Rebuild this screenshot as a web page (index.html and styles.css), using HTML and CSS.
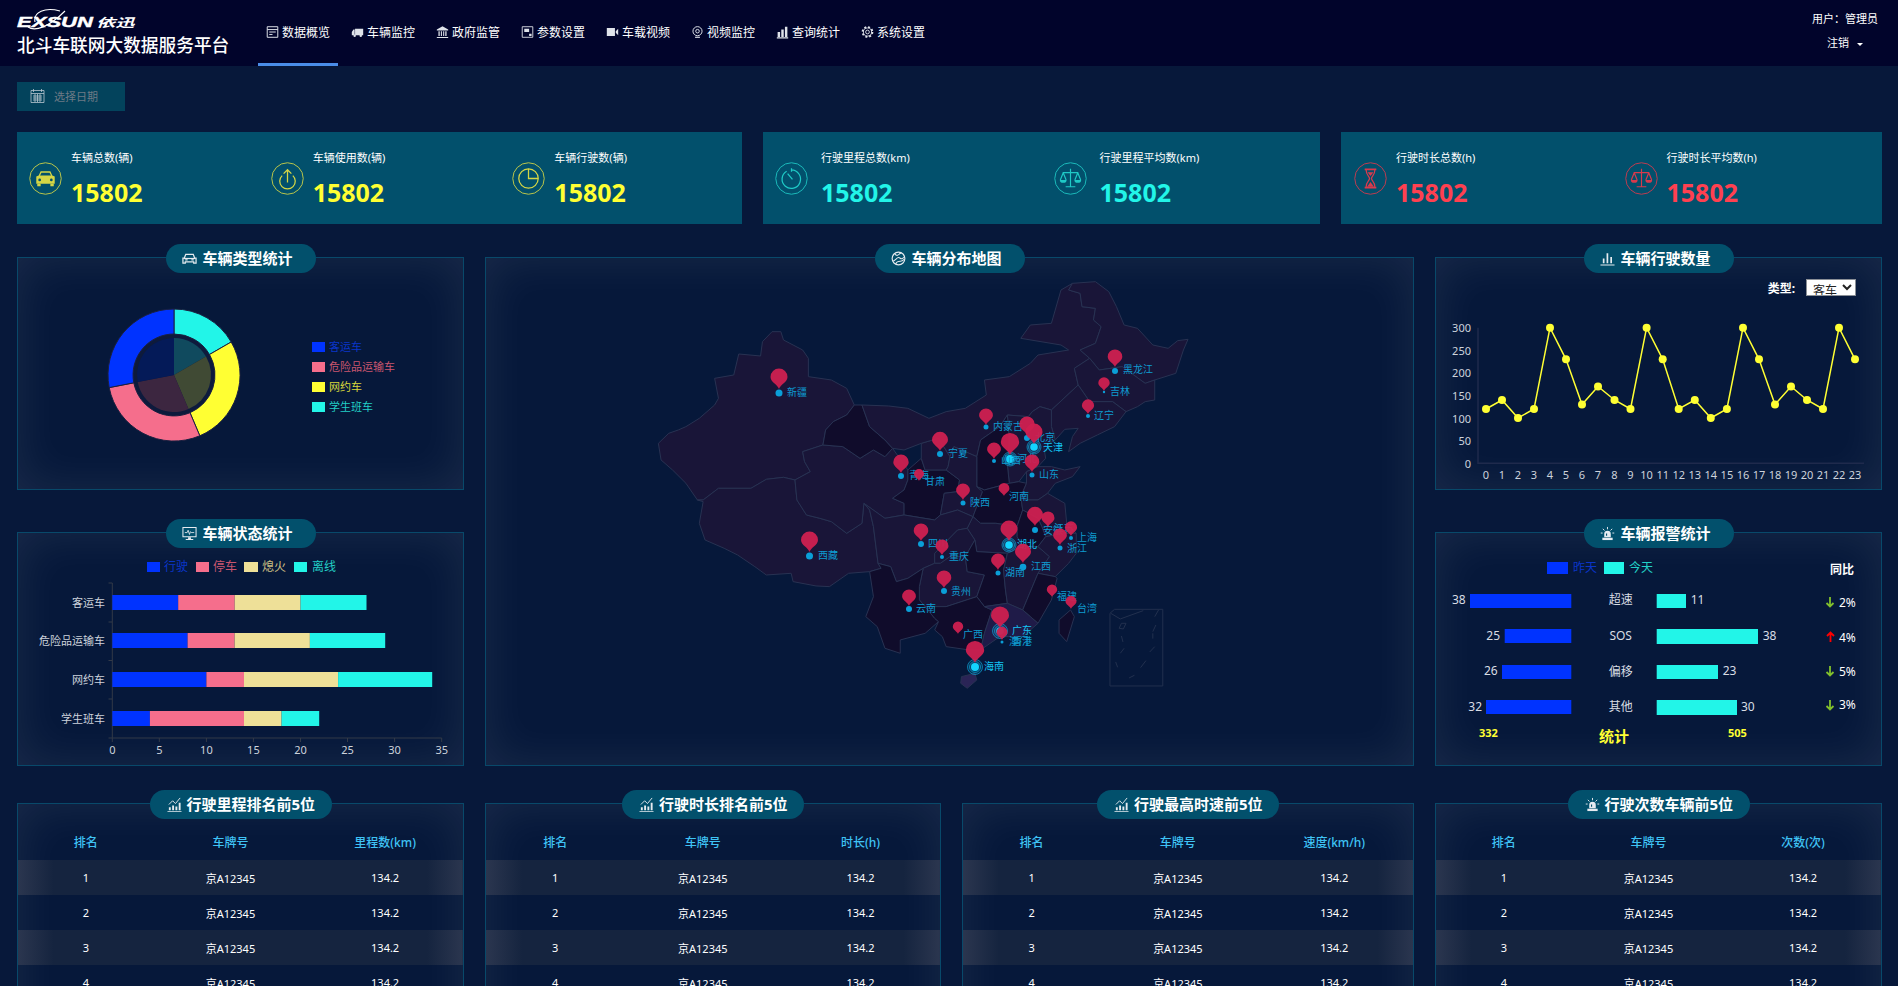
FILE: index.html
```html
<!DOCTYPE html>
<html lang="zh-CN">
<head>
<meta charset="utf-8">
<title>北斗车联网大数据服务平台</title>
<link rel="stylesheet" href="styles.css">
</head>
<body>
<svg class="sprite" aria-hidden="true">
  <symbol id="n-doc" viewBox="0 0 16 16"><path d="M1.5 1.5h13v13h-13zM1.5 5h13M4 8h8M4 11h4" fill="none" stroke="currentColor" stroke-width="1.2"/></symbol>
  <symbol id="n-truck" viewBox="0 0 16 16"><path d="M5 4h10v8H5zM1 8l2-3h1.5v7H1z" fill="currentColor"/><circle cx="4.5" cy="12.5" r="1.5" fill="currentColor"/><circle cx="12" cy="12.5" r="1.5" fill="currentColor"/></symbol>
  <symbol id="n-bank" viewBox="0 0 16 16"><path d="M8 1l7 4v1H1V5zM3 7h1.6v6H3zM6 7h1.3v6H6zM8.8 7h1.3v6H8.8zM11.4 7H13v6h-1.6zM1 14h14v1.5H1z" fill="currentColor"/></symbol>
  <symbol id="n-set" viewBox="0 0 16 16"><path d="M1.5 1.5h13v13h-13z" fill="none" stroke="currentColor" stroke-width="1.1"/><path d="M4 4h6v4H4zM10 10h3v3h-3z" fill="currentColor"/></symbol>
  <symbol id="n-video" viewBox="0 0 16 16"><path d="M1 3h10v10H1zM12 7l3-3v8l-3-3z" fill="currentColor"/></symbol>
  <symbol id="n-cam" viewBox="0 0 16 16"><circle cx="8" cy="7" r="5.6" fill="none" stroke="currentColor" stroke-width="1.2"/><circle cx="8" cy="7" r="2.2" fill="none" stroke="currentColor" stroke-width="1.2"/><path d="M5 14.5h6" stroke="currentColor" stroke-width="1.4"/></symbol>
  <symbol id="n-bars" viewBox="0 0 16 16"><path d="M2 8h3v6H2zM6.5 5h3v9h-3zM11 1.500h3V14h-3zM1 14.500h14V16H1z" fill="currentColor"/></symbol>
  <symbol id="n-gear" viewBox="0 0 16 16"><circle cx="8" cy="8" r="6" fill="none" stroke="currentColor" stroke-width="2.400" stroke-dasharray="2.400 2.310"/><circle cx="8" cy="8" r="5" fill="none" stroke="currentColor" stroke-width="1"/><circle cx="8" cy="8" r="2.300" fill="none" stroke="currentColor" stroke-width="1.100"/></symbol>
  <symbol id="n-cal" viewBox="0 0 15 15"><path d="M1 2.500h13v12H1zM1 5.500h13M3.500 1v3M11.500 1v3M3 8h9M3 10h9M3 12h9M5 6v8M7.500 6v8M10 6v8" fill="none" stroke="currentColor" stroke-width=".8"/></symbol>
  <symbol id="s-taxi" viewBox="0 0 34 34"><circle cx="17" cy="17" r="16.200" fill="none" stroke="currentColor" stroke-width=".9"/><path d="M12 9.500h10l2 4.500 2.500 1v7.500h-19V15l2.500-1z" fill="currentColor"/><path d="M12.800 11h8.400l1.400 3H11.400z" fill="#02506c"/><circle cx="11" cy="18.500" r="1.400" fill="#02506c"/><circle cx="23" cy="18.500" r="1.400" fill="#02506c"/><path d="M8.500 22.500h3.500v2.500H8.500zM22 22.500h3.500v2.500H22z" fill="currentColor"/></symbol>
  <symbol id="s-up" viewBox="0 0 34 34"><circle cx="17" cy="17" r="16.200" fill="none" stroke="currentColor" stroke-width=".9"/><path d="M11.500 14a8 8 0 1 0 11 0M17 21V8M13 12l4-4 4 4" fill="none" stroke="currentColor" stroke-width="1.300"/></symbol>
  <symbol id="s-pie" viewBox="0 0 34 34"><circle cx="17" cy="17" r="16.200" fill="none" stroke="currentColor" stroke-width=".9"/><circle cx="17" cy="17" r="10" fill="none" stroke="currentColor" stroke-width="1.300"/><path d="M17 7v10h10" fill="none" stroke="currentColor" stroke-width="1.300"/></symbol>
  <symbol id="s-timer" viewBox="0 0 34 34"><circle cx="17" cy="17" r="16.200" fill="none" stroke="currentColor" stroke-width=".9"/><path d="M12 9.500a9.500 9.500 0 1 0 5-1.300M17 6.500v3.500M13 12l5 6" fill="none" stroke="currentColor" stroke-width="1.300"/></symbol>
  <symbol id="s-scale" viewBox="0 0 34 34"><circle cx="17" cy="17" r="16.200" fill="none" stroke="currentColor" stroke-width=".9"/><path d="M17 7v18M12 25.500h10M9 11h16M9.500 11l-3 7.500M9.500 11l3 7.500M24.500 11l-3 7.500M24.500 11l3 7.500" fill="none" stroke="currentColor" stroke-width="1.200"/><path d="M6 18.500h7a3.500 3 0 0 1-7 0zM21 18.500h7a3.500 3 0 0 1-7 0z" fill="currentColor"/></symbol>
  <symbol id="s-glass" viewBox="0 0 34 34"><circle cx="17" cy="17" r="16.200" fill="none" stroke="currentColor" stroke-width=".9"/><path d="M11 7.500h12M11 26.500h12" stroke="currentColor" stroke-width="1.800"/><path d="M12.500 8c0 6 3.500 6.500 3.500 9s-3.500 3-3.500 9M21.500 8c0 6-3.500 6.500-3.500 9s3.500 3 3.500 9" fill="none" stroke="currentColor" stroke-width="1.300"/><path d="M13.500 25.500l3.500-5 3.500 5zM14 10.500h6l-3 4z" fill="currentColor"/></symbol>
  <symbol id="p-car" viewBox="0 0 16 16"><path d="M4 3.500h8l1.500 4H15v5.500h-2.500v-1.500h-9V13H1V7.500h1.500z" fill="none" stroke="currentColor" stroke-width="1.300"/><path d="M2 8h12" stroke="currentColor" stroke-width="1.300"/><path d="M3.500 9.500h2.500M10 9.500h2.500" stroke="currentColor" stroke-width="1.200"/></symbol>
  <symbol id="p-monitor" viewBox="0 0 16 16"><path d="M1 1.500h14v10H1z" fill="none" stroke="currentColor" stroke-width="1.100"/><path d="M3 7h2.500l1-2.500L8 9l1-3 .8 1H13" fill="none" stroke="currentColor" stroke-width=".9"/><path d="M6.500 12h3v1.800h-3zM4 13.800h8V15H4z" fill="currentColor"/></symbol>
  <symbol id="p-bars" viewBox="0 0 16 16"><path d="M3 8h1.800v5H3zM7 2.500h1.800V13H7zM11 6.500h1.800V13H11zM.5 14.500h15v1H.5z" fill="currentColor"/></symbol>
  <symbol id="p-alarm" viewBox="0 0 16 16"><path d="M4.500 12V8.500a3.500 3.500 0 0 1 7 0V12z" fill="currentColor"/><path d="M2.500 12.500h11V15h-11z" fill="currentColor"/><path d="M8 1v2.500M3 3l1.800 1.800M13 3l-1.800 1.800M.8 7.500h2M13.200 7.500h2" stroke="currentColor" stroke-width="1"/><path d="M7 8v2.500" stroke="#02506c" stroke-width="1.200"/></symbol>
  <symbol id="p-trend" viewBox="0 0 16 16"><path d="M2 11h2v3H2zM5.500 9h2v5h-2zM9 10h2v4H9zM12.500 6h2v8h-2zM.5 14.800h15v1H.5z" fill="currentColor"/><path d="M2 8l4-4 3 3 5-6" fill="none" stroke="currentColor" stroke-width="1"/></symbol>
  <symbol id="p-globe" viewBox="0 0 16 16"><circle cx="8" cy="8" r="6.800" fill="none" stroke="currentColor" stroke-width="1.200"/><path d="M2 11c3-1 4-4 6-4s2 2 4 1 2-2 2-2M5 14c1-3 3-3 5-3s3-1 4-2M4 3c1 2 3 2 4 1s2-2 3-2" fill="none" stroke="currentColor" stroke-width="1.100"/></symbol>
</svg>

<header class="topbar">
  <div class="brand">
    <div class="logo">
      <svg class="logo-swoosh" viewBox="0 0 40 24"><path d="M1 19C8 24 22 19 38 3M8 14C6 4 18-1 33 3" fill="none" stroke="#fff" stroke-width="1.100"/></svg>
      <span class="logo-latin">EXSUN</span><span class="logo-cn">依迅</span>
    </div>
    <h1 class="brand-title">北斗车联网大数据服务平台</h1>
  </div>
  <nav class="nav">
    <a class="nav-item nav-active"><svg class="nav-icon"><use href="#n-doc"/></svg>数据概览</a>
    <a class="nav-item"><svg class="nav-icon"><use href="#n-truck"/></svg>车辆监控</a>
    <a class="nav-item"><svg class="nav-icon"><use href="#n-bank"/></svg>政府监管</a>
    <a class="nav-item"><svg class="nav-icon"><use href="#n-set"/></svg>参数设置</a>
    <a class="nav-item"><svg class="nav-icon"><use href="#n-video"/></svg>车载视频</a>
    <a class="nav-item"><svg class="nav-icon"><use href="#n-cam"/></svg>视频监控</a>
    <a class="nav-item"><svg class="nav-icon"><use href="#n-bars"/></svg>查询统计</a>
    <a class="nav-item"><svg class="nav-icon"><use href="#n-gear"/></svg>系统设置</a>
  </nav>
  <div class="user">
    <div class="user-name">用户：管理员</div>
    <div class="user-logout">注销<span class="caret"></span></div>
  </div>
</header>

<main class="main">
  <div class="date-box"><svg class="date-icon"><use href="#n-cal"/></svg><span>选择日期</span></div>

  <section class="stats">
    <div class="stat-card stat-a">
      <div class="stat yellow"><svg class="stat-icon"><use href="#s-taxi"/></svg><div class="stat-body"><div class="stat-label">车辆总数(辆)</div><div class="stat-value">15802</div></div></div>
      <div class="stat yellow"><svg class="stat-icon"><use href="#s-up"/></svg><div class="stat-body"><div class="stat-label">车辆使用数(辆)</div><div class="stat-value">15802</div></div></div>
      <div class="stat yellow"><svg class="stat-icon"><use href="#s-pie"/></svg><div class="stat-body"><div class="stat-label">车辆行驶数(辆)</div><div class="stat-value">15802</div></div></div>
    </div>
    <div class="stat-card stat-b">
      <div class="stat cyan"><svg class="stat-icon"><use href="#s-timer"/></svg><div class="stat-body"><div class="stat-label">行驶里程总数(km)</div><div class="stat-value">15802</div></div></div>
      <div class="stat cyan"><svg class="stat-icon"><use href="#s-scale"/></svg><div class="stat-body"><div class="stat-label">行驶里程平均数(km)</div><div class="stat-value">15802</div></div></div>
    </div>
    <div class="stat-card stat-c">
      <div class="stat red"><svg class="stat-icon"><use href="#s-glass"/></svg><div class="stat-body"><div class="stat-label">行驶时长总数(h)</div><div class="stat-value">15802</div></div></div>
      <div class="stat red"><svg class="stat-icon"><use href="#s-scale"/></svg><div class="stat-body"><div class="stat-label">行驶时长平均数(h)</div><div class="stat-value">15802</div></div></div>
    </div>
  </section>

  <section class="board">
    <article class="panel">
      <h2 class="pill"><svg class="pill-icon"><use href="#p-car"/></svg>车辆类型统计</h2>
      <svg class="chart" viewBox="18 273 445 216" width="445" height="216">
        <g transform="translate(174 375)">
          <circle r="41" fill="#0d1a3c"/>
          <path class="slice" fill="#22f5e8" d="M0 -66A66 66 0 0 1 57.2 -33L35.500 -20.500A41 41 0 0 0 0 -41Z"/>
          <path class="slice" fill="#ffff33" d="M57.2 -33A66 66 0 0 1 25.800 60.800L16 37.700A41 41 0 0 0 35.500 -20.500Z"/>
          <path class="slice" fill="#f56e8c" d="M25.800 60.800A66 66 0 0 1 -64.800 12.600L-40.200 7.800A41 41 0 0 0 16 37.700Z"/>
          <path class="slice" fill="#0033ff" d="M-64.800 12.600A66 66 0 0 1 0 -66L0 -41A41 41 0 0 0 -40.200 7.800Z"/>
          <path fill="#104a5e" d="M0 0V-37A37 37 0 0 1 32 -18.500Z"/>
          <path fill="#404a34" d="M0 0L32 -18.500A37 37 0 0 1 14.500 34.100Z"/>
          <path fill="#3c2640" d="M0 0L14.500 34.100A37 37 0 0 1 -36.300 7.100Z"/>
          <path fill="#041a58" d="M0 0L-36.300 7.100A37 37 0 0 1 0 -37Z"/>
        </g>
        <rect x="312" y="342" width="13" height="10" fill="#0033ff"/><text class="lg c-blue" x="329" y="346">客运车</text>
        <rect x="312" y="362" width="13" height="10" fill="#f56e8c"/><text class="lg c-pink" x="329" y="366">危险品运输车</text>
        <rect x="312" y="382" width="13" height="10" fill="#ffff33"/><text class="lg c-yellow" x="329" y="386">网约车</text>
        <rect x="312" y="402" width="13" height="10" fill="#22f5e8"/><text class="lg c-cyan" x="329" y="406">学生班车</text>
      </svg>
    </article>

    <article class="panel panel-map">
      <h2 class="pill"><svg class="pill-icon"><use href="#p-globe"/></svg>车辆分布地图</h2>
      <svg class="chart" viewBox="486 273 927 492" width="927" height="492">
        <defs><path id="pin" d="M0 0C-1.500 -5 -10 -8 -10 -14A10 10 0 0 1 10 -14C10 -8 1.500 -5 0 0Z"/></defs>
        <g transform="translate(640 270) scale(.3827 .3333)">
          <path class="prov" d="M48 520L75 490 100 480 120 470 155 445 195 405 205 385 195 325 245 315 258 252 315 258 320 215 345 185 368 185 375 210 400 225 425 240 440 265 440 320 500 330 540 355 560 405 540 435 505 455 485 480 478 525 425 545 430 575 445 605 405 630 375 622 330 628 290 655 205 655 165 690 150 690 120 640 85 600 55 570Z"/>
          <path class="prov" d="M150 690L165 690 205 655 290 655 330 628 375 622 405 630 410 690 435 735 470 745 500 755 540 790 580 760 585 700 600 720 610 770 622 880 630 895 600 905 545 910 495 950 460 948 400 935 395 910 330 915 300 890 255 855 220 835 170 810 155 760 165 695Z"/>
          <path class="prov" d="M425 545L478 525 530 530 575 565 610 540 640 560 660 535 700 600 700 630 690 660 660 685 690 700 690 735 640 745 585 700 580 760 540 790 500 755 470 745 435 735 410 690 405 630 445 605 430 575Z"/>
          <path class="prov dark" d="M560 405L580 405 600 470 640 510 660 535 640 560 610 540 575 565 530 530 478 525 485 480 505 455 540 435Z"/>
          <path class="prov dark" d="M700 600L735 565 745 600 800 600 835 630 830 665 795 670 785 735 770 750 690 735 690 700 660 685 690 660 700 630Z"/>
          <path class="prov" d="M735 520L780 505 810 560 805 590 800 600 745 600 735 565Z"/>
          <path class="prov" d="M580 405L650 408 700 415 755 445 800 425 850 415 905 375 900 330 965 320 1020 280 1040 255 1120 240 1100 225 995 205 1020 165 1075 160 1100 60 1130 40 1120 60 1150 70 1155 110 1190 115 1185 150 1205 170 1190 220 1150 240 1175 265 1135 295 1145 345 1075 420 1045 410 1025 425 1015 440 960 435 940 470 890 510 880 560 820 530 810 560 780 505 735 520 690 540 660 535 640 510 600 470Z"/>
          <path class="prov" d="M1130 40L1190 35 1225 65 1245 110 1265 165 1300 175 1340 225 1380 235 1405 212 1432 208 1420 240 1400 310 1345 330 1320 340 1260 290 1200 300 1175 265 1150 240 1190 220 1205 170 1185 150 1190 115 1155 110 1150 70 1120 60Z"/>
          <path class="prov" d="M1135 295L1175 265 1200 300 1260 290 1320 340 1345 330 1345 390 1320 395 1300 410 1270 425 1235 395 1175 395 1145 345Z"/>
          <path class="prov" d="M1145 345L1175 395 1235 395 1270 425 1240 470 1195 495 1150 520 1120 545 1130 500 1145 475 1110 478 1085 510 1075 470 1075 420Z"/>
          <path class="prov" d="M1015 440L1025 425 1045 410 1075 420 1075 470 1085 510 1055 530 1060 565 1040 590 1010 605 990 635 965 640 960 585 965 510 960 435Z"/>
          <path class="prov dark" d="M960 435L965 510 960 585 965 640 900 660 880 650 880 560 890 510 940 470Z"/>
          <path class="prov" d="M810 560L820 530 880 560 880 650 895 665 880 710 870 740 830 720 785 735 795 670 830 665 835 630 800 600 805 590Z"/>
          <path class="prov dark" d="M880 650L900 660 965 640 990 635 1010 640 995 680 1000 720 985 770 930 760 890 760 870 740 880 710 895 665Z"/>
          <path class="prov" d="M1010 605L1040 590 1075 590 1110 600 1150 590 1130 620 1085 640 1065 670 1040 690 1010 690 995 680 1010 640Z"/>
          <path class="prov" d="M1040 690L1065 670 1110 700 1115 760 1140 790 1110 790 1060 800 1050 770 1040 745 1000 720 995 680 1010 690Z"/>
          <path class="prov dark" d="M1000 720L1040 745 1050 770 1060 800 1040 830 1000 830 985 800 985 770Z"/>
          <path class="prov" d="M855 775L870 740 890 760 930 760 985 770 985 800 1000 830 960 850 880 845 875 810Z"/>
          <path class="prov" d="M585 700L640 745 690 735 770 750 785 735 830 720 870 740 855 775 830 780 770 850 770 880 740 895 700 925 670 935 655 890 622 880 610 770 600 720Z"/>
          <path class="prov" d="M830 780L855 775 875 810 850 860 810 860 785 880 770 880 770 850Z"/>
          <path class="prov" d="M770 880L785 880 810 860 850 860 855 905 900 915 880 980 800 1010 745 1010 730 990 730 950 740 895Z"/>
          <path class="prov dark" d="M622 880L655 890 670 935 700 925 740 895 730 950 730 990 745 1010 770 1045 780 1055 745 1090 680 1110 680 1150 640 1135 620 1070 590 1040 610 980 600 905 630 895Z"/>
          <path class="prov dark" d="M880 845L960 850 950 900 955 960 960 1000 900 1010 880 980 900 915 855 905 850 860 875 810Z"/>
          <path class="prov" d="M960 850L1000 830 1040 830 1070 860 1040 910 1000 1020 960 1000 955 960 950 900Z"/>
          <path class="prov" d="M1040 830L1060 800 1110 790 1140 790 1140 850 1120 880 1085 920 1040 910 1070 860Z"/>
          <path class="prov dark" d="M1040 910L1085 920 1090 925 1075 990 1040 1060 1020 1040 1000 1020Z"/>
          <path class="prov dark" d="M745 1010L800 1010 880 980 900 1010 920 1020 900 1090 890 1140 860 1140 800 1130 790 1100 770 1080 780 1055 770 1045Z"/>
          <path class="prov bright" d="M900 1010L960 1000 1000 1020 1020 1040 1040 1060 1000 1100 940 1100 890 1140 900 1090 920 1020Z"/>
          <path class="prov hainan" d="M840 1220L875 1210 880 1230 855 1255 838 1240Z"/>
          <path class="prov dark" d="M1125 1020L1135 1040 1115 1115 1095 1090 1095 1050Z"/>
          <path class="inset" d="M1228 1030L1240 1018H1366V1248H1228ZM1230 1030L1255 1047 1315 1022M1355 1020L1345 1040M1258 1060H1270L1263 1077 1252 1075ZM1348 1065L1340 1085M1340 1090V1106M1258 1098L1262 1116M1345 1130L1332 1146M1265 1135L1255 1150M1243 1176L1248 1192M1322 1172L1308 1193M1292 1216L1278 1224"/>
        </g>
        <use href="#pin" class="pin" transform="translate(779 389) scale(.85)"/><circle class="dot" cx="779" cy="393" r="3.500"/><text class="ml" x="787" y="392">新疆</text>
        <use href="#pin" class="pin" transform="translate(809.500 552) scale(.85)"/><circle class="dot" cx="809.500" cy="556" r="3.500"/><text class="ml" x="818" y="555">西藏</text>
        <use href="#pin" class="pin" transform="translate(1115 367) scale(.73)"/><circle class="dot" cx="1115" cy="371" r="3"/><text class="ml" x="1123" y="369">黑龙江</text>
        <use href="#pin" class="pin" transform="translate(1104 391) scale(.57)"/><circle class="dot" cx="1104" cy="392" r="1.200"/><text class="ml" x="1110" y="391">吉林</text>
        <use href="#pin" class="pin" transform="translate(1088 414) scale(.61)"/><circle class="dot" cx="1088" cy="416" r="2"/><text class="ml" x="1094" y="415">辽宁</text>
        <use href="#pin" class="pin" transform="translate(986 425) scale(.69)"/><circle class="dot" cx="986" cy="427" r="2.500"/><text class="ml" x="993" y="426">内蒙古</text>
        <circle class="dot" cx="1027" cy="438" r="3"/><text class="ml" x="1035" y="437">北京</text>
        <use href="#pin" class="pin" transform="translate(1027 435) scale(.77)"/>
        <circle class="ring" cx="1034" cy="447" r="7"/><circle class="ring" cx="1034" cy="447" r="5.500"/><circle class="dot hot" cx="1034" cy="447" r="3.800"/><text class="ml hot-t" x="1043" y="447">天津</text>
        <use href="#pin" class="pin" transform="translate(1034 444) scale(.85)"/>
        <circle class="ring" cx="1010" cy="459" r="7"/><circle class="ring" cx="1010" cy="459" r="5.500"/><circle class="dot hot" cx="1010" cy="459" r="4"/><text class="ml" x="1017" y="458">河北</text>
        <use href="#pin" class="pin" transform="translate(1010 455) scale(.92)"/>
        <circle class="dot" cx="994" cy="461" r="2"/><text class="ml" x="1001" y="460">山西</text>
        <use href="#pin" class="pin" transform="translate(994 459) scale(.69)"/>
        <circle class="dot" cx="1032" cy="475" r="2.500"/><text class="ml" x="1039" y="474">山东</text>
        <use href="#pin" class="pin" transform="translate(1032 472) scale(.73)"/>
        <use href="#pin" class="pin" transform="translate(940 451) scale(.8)"/><circle class="dot" cx="940" cy="454" r="3"/><text class="ml" x="948" y="453">宁夏</text>
        <circle class="dot" cx="901" cy="476" r="3"/><text class="ml" x="909" y="475">青海</text>
        <use href="#pin" class="pin" transform="translate(901 473) scale(.77)"/>
        <use href="#pin" class="pin" transform="translate(919 481) scale(.5)"/><text class="ml" x="925" y="481">甘肃</text>
        <use href="#pin" class="pin" transform="translate(963 500) scale(.69)"/><circle class="dot" cx="963" cy="503" r="2.500"/><text class="ml" x="970" y="502">陕西</text>
        <use href="#pin" class="pin" transform="translate(1004 496) scale(.54)"/><text class="ml" x="1009" y="496">河南</text>
        <circle class="dot" cx="1035" cy="530" r="3"/><text class="ml" x="1043" y="530">安徽</text>
        <use href="#pin" class="pin" transform="translate(1035 526) scale(.8)"/>
        <text class="ml" x="1054" y="528">江苏</text><use href="#pin" class="pin" transform="translate(1048 527) scale(.65)"/>
        <circle class="dot" cx="1071" cy="538" r="2"/><text class="ml" x="1077" y="537">上海</text>
        <use href="#pin" class="pin" transform="translate(1071 536) scale(.61)"/>
        <circle class="dot" cx="1060" cy="548" r="2.500"/><text class="ml" x="1067" y="548">浙江</text>
        <use href="#pin" class="pin" transform="translate(1060 545) scale(.69)"/>
        <circle class="ring" cx="1009" cy="545" r="7"/><circle class="ring" cx="1009" cy="545" r="5.500"/><circle class="dot hot" cx="1009" cy="545" r="3.800"/><text class="ml hot-t" x="1017" y="544">湖北</text>
        <use href="#pin" class="pin" transform="translate(1009 541) scale(.85)"/>
        <circle class="dot" cx="1023" cy="567" r="3.300"/><text class="ml" x="1031" y="566">江西</text>
        <use href="#pin" class="pin" transform="translate(1023 563) scale(.8)"/>
        <circle class="dot" cx="998" cy="573" r="2.500"/><text class="ml" x="1005" y="572">湖南</text>
        <use href="#pin" class="pin" transform="translate(998 570) scale(.69)"/>
        <circle class="dot" cx="921" cy="544" r="3"/><text class="ml" x="928" y="543">四川</text>
        <use href="#pin" class="pin" transform="translate(921 541) scale(.73)"/>
        <circle class="dot" cx="942" cy="557" r="2"/><text class="ml" x="949" y="556">重庆</text>
        <use href="#pin" class="pin" transform="translate(942 555) scale(.65)"/>
        <circle class="dot" cx="944" cy="591" r="3"/><text class="ml" x="951" y="591">贵州</text>
        <use href="#pin" class="pin" transform="translate(944 588) scale(.73)"/>
        <circle class="dot" cx="909" cy="609" r="3"/><text class="ml" x="916" y="608">云南</text>
        <use href="#pin" class="pin" transform="translate(909 606) scale(.69)"/>
        <text class="ml" x="1057" y="596">福建</text><use href="#pin" class="pin" transform="translate(1052 597) scale(.52)"/>
        <text class="ml" x="1077" y="608">台湾</text><use href="#pin" class="pin" transform="translate(1071 609) scale(.55)"/>
        <text class="ml" x="963" y="634">广西</text><use href="#pin" class="pin" transform="translate(958 634) scale(.52)"/>
        <circle class="ring" cx="1000" cy="631" r="7.500"/><circle class="ring" cx="1000" cy="631" r="5.500"/><circle class="dot hot" cx="1000" cy="631" r="3.800"/><text class="ml hot-t" x="1012" y="630">广东</text>
        <use href="#pin" class="pin" transform="translate(1000 628) scale(.9)"/>
        <circle class="dot" cx="1002" cy="642" r="1.500"/><text class="ml" x="1009" y="641">澳门</text><text class="ml" x="1012" y="641">香港</text>
        <use href="#pin" class="pin" transform="translate(1002 640) scale(.55)"/>
        <circle class="ring" cx="975" cy="667" r="7.500"/><circle class="ring" cx="975" cy="667" r="5.500"/><circle class="dot hot" cx="975" cy="667" r="4"/><text class="ml hot-t" x="984" y="666">海南</text>
        <use href="#pin" class="pin" transform="translate(975 663) scale(.92)"/>
      </svg>
    </article>

    <article class="panel">
      <h2 class="pill"><svg class="pill-icon"><use href="#p-bars"/></svg>车辆行驶数量</h2>
      <div class="toolbar">
        <label class="type-label" for="vehicle-type">类型:</label>
        <select class="type-select" id="vehicle-type"><option>客车</option><option>货车</option></select>
      </div>
      <svg class="chart" viewBox="1436 300 445 189" width="445" height="189">
        <path class="axis" d="M1478 327.700V463.300H1864"/>
        <text class="ax end" x="1471" y="327.500">300</text><text class="ax end" x="1471" y="350">250</text><text class="ax end" x="1471" y="372.500">200</text><text class="ax end" x="1471" y="395">150</text><text class="ax end" x="1471" y="418">100</text><text class="ax end" x="1471" y="440">50</text><text class="ax end" x="1471" y="463">0</text>
        <g class="xl">
          <text x="1486" y="474">0</text><text x="1502" y="474">1</text><text x="1518" y="474">2</text><text x="1534" y="474">3</text><text x="1550" y="474">4</text><text x="1566" y="474">5</text><text x="1582" y="474">6</text><text x="1598" y="474">7</text><text x="1614.500" y="474">8</text><text x="1630.500" y="474">9</text><text x="1646.600" y="474">10</text><text x="1662.700" y="474">11</text><text x="1678.700" y="474">12</text><text x="1694.800" y="474">13</text><text x="1710.800" y="474">14</text><text x="1726.900" y="474">15</text><text x="1743" y="474">16</text><text x="1759" y="474">17</text><text x="1775" y="474">18</text><text x="1791" y="474">19</text><text x="1807" y="474">20</text><text x="1823" y="474">21</text><text x="1839" y="474">22</text><text x="1855" y="474">23</text>
        </g>
        <polyline class="line" points="1486,409 1502,400 1518,418 1534,409 1550,327.700 1566,359.300 1582,404.500 1598,386.500 1614.500,400 1630.500,409 1646.600,327.700 1662.700,359.300 1678.700,409 1694.800,400 1710.800,418 1726.900,409 1743,327.700 1759,359.300 1775,404.500 1791,386.500 1807,400 1823,409 1839,327.700 1855,359.300"/>
        <g class="pts">
          <circle cx="1486" cy="409" r="4"/><circle cx="1502" cy="400" r="4"/><circle cx="1518" cy="418" r="4"/><circle cx="1534" cy="409" r="4"/><circle cx="1550" cy="327.700" r="4"/><circle cx="1566" cy="359.300" r="4"/><circle cx="1582" cy="404.500" r="4"/><circle cx="1598" cy="386.500" r="4"/><circle cx="1614.500" cy="400" r="4"/><circle cx="1630.500" cy="409" r="4"/><circle cx="1646.600" cy="327.700" r="4"/><circle cx="1662.700" cy="359.300" r="4"/><circle cx="1678.700" cy="409" r="4"/><circle cx="1694.800" cy="400" r="4"/><circle cx="1710.800" cy="418" r="4"/><circle cx="1726.900" cy="409" r="4"/><circle cx="1743" cy="327.700" r="4"/><circle cx="1759" cy="359.300" r="4"/><circle cx="1775" cy="404.500" r="4"/><circle cx="1791" cy="386.500" r="4"/><circle cx="1807" cy="400" r="4"/><circle cx="1823" cy="409" r="4"/><circle cx="1839" cy="327.700" r="4"/><circle cx="1855" cy="359.300" r="4"/>
        </g>
      </svg>
    </article>

    <article class="panel">
      <h2 class="pill"><svg class="pill-icon"><use href="#p-monitor"/></svg>车辆状态统计</h2>
      <svg class="chart" viewBox="18 548 445 217" width="445" height="217">
        <rect class="b-blue" x="147" y="562" width="13" height="10"/><text class="lg12 c-blue" x="164" y="566">行驶</text>
        <rect class="b-pink" x="196" y="562" width="13" height="10"/><text class="lg12 c-pink" x="213" y="566">停车</text>
        <rect class="b-khaki" x="244" y="562" width="14" height="10"/><text class="lg12 c-khaki" x="262" y="566">熄火</text>
        <rect class="b-cyan" x="294" y="562" width="13" height="10"/><text class="lg12 c-cyan" x="312" y="566">离线</text>
        <path class="axis-thin" d="M108.500 583H112.300V738H441.700M108.500 622H112.300M108.500 660.500H112.300M108.500 699H112.300M108.500 738H112.300M112.300 738V742M159.300 738V742M206.400 738V742M253.400 738V742M300.500 738V742M347.500 738V742M394.600 738V742M441.700 738V742"/>
        <text class="ax end" x="105" y="602">客运车</text><text class="ax end" x="105" y="640.500">危险品运输车</text><text class="ax end" x="105" y="679">网约车</text><text class="ax end" x="105" y="718">学生班车</text>
        <rect class="b-blue" x="112.300" y="595" width="65.900" height="15"/><rect class="b-pink" x="178.200" y="595" width="56.500" height="15"/><rect class="b-khaki" x="234.700" y="595" width="65.900" height="15"/><rect class="b-cyan" x="300.600" y="595" width="65.900" height="15"/>
        <rect class="b-blue" x="112.300" y="633" width="75.300" height="15"/><rect class="b-pink" x="187.600" y="633" width="47" height="15"/><rect class="b-khaki" x="234.600" y="633" width="75.300" height="15"/><rect class="b-cyan" x="309.900" y="633" width="75.300" height="15"/>
        <rect class="b-blue" x="112.300" y="672" width="94.100" height="15"/><rect class="b-pink" x="206.400" y="672" width="37.600" height="15"/><rect class="b-khaki" x="244" y="672" width="94.100" height="15"/><rect class="b-cyan" x="338.100" y="672" width="94.100" height="15"/>
        <rect class="b-blue" x="112.300" y="711" width="37.600" height="15"/><rect class="b-pink" x="149.900" y="711" width="94.100" height="15"/><rect class="b-khaki" x="244" y="711" width="37.600" height="15"/><rect class="b-cyan" x="281.600" y="711" width="37.600" height="15"/>
        <g class="xl"><text x="112.300" y="749">0</text><text x="159.300" y="749">5</text><text x="206.400" y="749">10</text><text x="253.400" y="749">15</text><text x="300.500" y="749">20</text><text x="347.500" y="749">25</text><text x="394.600" y="749">30</text><text x="441.700" y="749">35</text></g>
      </svg>
    </article>

    <article class="panel">
      <h2 class="pill"><svg class="pill-icon"><use href="#p-alarm"/></svg>车辆报警统计</h2>
      <svg class="chart" viewBox="1436 548 445 217" width="445" height="217">
        <rect class="b-blue" x="1547" y="562" width="21" height="12"/><text class="lg12 c-blue" x="1573" y="567">昨天</text>
        <rect class="b-cyan" x="1604" y="562" width="20" height="12"/><text class="lg12 c-cyan" x="1629" y="567">今天</text>
        <text class="yoy-h" x="1830" y="569">同比</text>
        <rect class="b-blue" x="1470" y="594" width="101.300" height="14"/><rect class="b-blue" x="1504.700" y="629" width="66.600" height="14"/><rect class="b-blue" x="1502" y="665" width="69.300" height="14"/><rect class="b-blue" x="1486" y="700" width="85.300" height="14"/>
        <rect class="b-cyan" x="1656.700" y="594" width="29.300" height="14"/><rect class="b-cyan" x="1656.700" y="629" width="101.300" height="15"/><rect class="b-cyan" x="1656.700" y="665" width="61.300" height="14"/><rect class="b-cyan" x="1656.700" y="700" width="80.300" height="15"/>
        <text class="val end" x="1465.700" y="599">38</text><text class="val end" x="1500" y="635">25</text><text class="val end" x="1497.700" y="670">26</text><text class="val end" x="1482" y="706">32</text>
        <text class="val mid" x="1620.700" y="599">超速</text><text class="val mid" x="1620.700" y="635">SOS</text><text class="val mid" x="1620.700" y="671">偏移</text><text class="val mid" x="1620.700" y="706">其他</text>
        <text class="val" x="1690.700" y="599">11</text><text class="val" x="1762.700" y="635">38</text><text class="val" x="1722.700" y="670">23</text><text class="val" x="1741" y="706">30</text>
        <path class="arr-down" d="M1830 597V606M1826.500 603L1830 606.500 1833.500 603"/><text class="yoy" x="1839" y="602">2%</text>
        <path class="arr-up" d="M1830.500 642V632.500M1827 636L1830.500 632.500 1834 636"/><text class="yoy" x="1839" y="637">4%</text>
        <path class="arr-down" d="M1830 666V675M1826.500 672L1830 675.500 1833.500 672"/><text class="yoy" x="1839" y="671">5%</text>
        <path class="arr-down" d="M1830 700V709M1826.500 706L1830 709.500 1833.500 706"/><text class="yoy" x="1839" y="704">3%</text>
        <text class="sum" x="1479" y="732">332</text><text class="sum-title" x="1599" y="736">统计</text><text class="sum" x="1728" y="732">505</text>
      </svg>
    </article>
  </section>

  <section class="tables">
    <article class="panel panel-table">
      <h2 class="pill pill-wide"><svg class="pill-icon"><use href="#p-trend"/></svg>行驶里程排名前5位</h2>
      <table class="rank"><thead><tr><th>排名</th><th>车牌号</th><th>里程数(km)</th></tr></thead>
      <tbody><tr><td>1</td><td>京A12345</td><td>134.2</td></tr><tr><td>2</td><td>京A12345</td><td>134.2</td></tr><tr><td>3</td><td>京A12345</td><td>134.2</td></tr><tr><td>4</td><td>京A12345</td><td>134.2</td></tr><tr><td>5</td><td>京A12345</td><td>134.2</td></tr></tbody></table>
    </article>
    <article class="panel panel-table">
      <h2 class="pill pill-wide"><svg class="pill-icon"><use href="#p-trend"/></svg>行驶时长排名前5位</h2>
      <table class="rank"><thead><tr><th>排名</th><th>车牌号</th><th>时长(h)</th></tr></thead>
      <tbody><tr><td>1</td><td>京A12345</td><td>134.2</td></tr><tr><td>2</td><td>京A12345</td><td>134.2</td></tr><tr><td>3</td><td>京A12345</td><td>134.2</td></tr><tr><td>4</td><td>京A12345</td><td>134.2</td></tr><tr><td>5</td><td>京A12345</td><td>134.2</td></tr></tbody></table>
    </article>
    <article class="panel panel-table">
      <h2 class="pill pill-wide"><svg class="pill-icon"><use href="#p-trend"/></svg>行驶最高时速前5位</h2>
      <table class="rank"><thead><tr><th>排名</th><th>车牌号</th><th>速度(km/h)</th></tr></thead>
      <tbody><tr><td>1</td><td>京A12345</td><td>134.2</td></tr><tr><td>2</td><td>京A12345</td><td>134.2</td></tr><tr><td>3</td><td>京A12345</td><td>134.2</td></tr><tr><td>4</td><td>京A12345</td><td>134.2</td></tr><tr><td>5</td><td>京A12345</td><td>134.2</td></tr></tbody></table>
    </article>
    <article class="panel panel-table">
      <h2 class="pill pill-wide"><svg class="pill-icon"><use href="#p-alarm"/></svg>行驶次数车辆前5位</h2>
      <table class="rank"><thead><tr><th>排名</th><th>车牌号</th><th>次数(次)</th></tr></thead>
      <tbody><tr><td>1</td><td>京A12345</td><td>134.2</td></tr><tr><td>2</td><td>京A12345</td><td>134.2</td></tr><tr><td>3</td><td>京A12345</td><td>134.2</td></tr><tr><td>4</td><td>京A12345</td><td>134.2</td></tr><tr><td>5</td><td>京A12345</td><td>134.2</td></tr></tbody></table>
    </article>
  </section>
</main>
</body>
</html>
```

FILE: styles.css
```css
* { box-sizing: border-box; }
html, body { margin: 0; height: 986px; overflow: hidden; }
body {
  background: #07183a;
  color: #fff;
  font-family: "Noto Sans", "Noto Sans CJK SC", sans-serif;
}
.sprite { display: none; }

/* top bar */
.topbar { height: 66px; background: #01042b; display: flex; padding: 0 20px 0 17px; }
.brand { width: 241px; flex: none; }
.logo { position: relative; height: 32px; padding-top: 13px; white-space: nowrap; line-height: 16px; }
.logo-swoosh { position: absolute; left: 10px; top: 8px; width: 40px; height: 24px; }
.logo-latin {
  display: inline-block; width: 79px;
  font: italic 700 15px/16px "Liberation Sans", sans-serif;
  -webkit-text-stroke: .4px #fff;
  transform: scaleX(1.47); transform-origin: 0 50%;
}
.logo-cn {
  display: inline-block; width: 40px;
  font: italic 700 12px/16px "Noto Sans CJK SC", sans-serif;
  transform: scaleX(1.6); transform-origin: 0 50%;
}
.brand-title { margin: 0; font-size: 17.7px; font-weight: 500; line-height: 26px; white-space: nowrap; }
.nav { display: flex; gap: 5px; flex: 1; }
.nav-item {
  width: 80px; height: 66px; display: flex; align-items: center; justify-content: center; gap: 3px;
  font-size: 12px; border-bottom: 3px solid transparent; padding-top: 0; color: #fff;
}
.nav-active { border-bottom-color: #4a8de8; }
.nav-icon { width: 13px; height: 14px; flex: none; color: #dfe3ea; }
.user { margin-left: auto; font-size: 11px; text-align: right; }
.user-name { margin-top: 11px; line-height: 16px; }
.user-logout { margin-top: 8px; line-height: 16px; margin-right: 15px; }
.caret {
  display: inline-block; margin-left: 8px; vertical-align: 1px;
  border: 3px solid transparent; border-top-color: #fff; border-bottom: 0;
}

/* main */
.main { padding: 16px 16px 0 17px; }
.date-box {
  width: 108px; height: 29px; background: #03435c; display: flex; align-items: center;
  padding: 0 0 2px 13px; gap: 9px; font-size: 11px; color: #6d7a86;
}
.date-icon { width: 15px; height: 15px; color: #b9c6cf; }

.stats { display: flex; gap: 21px; margin-top: 21px; height: 92px; }
.stat-card { background: #02506c; display: flex; }
.stat-a { width: 725px; }
.stat-b { width: 557px; }
.stat-c { width: 541px; }
.stat { flex: 1 1 0; min-width: 0; display: flex; align-items: center; gap: 9px; padding-left: 12px; }
.stat-b .stat { gap: 13px; }
.stat-c .stat { padding-left: 13px; }
.stat-icon { width: 33px; height: 33px; flex: none; }
.stat-label { font-size: 11px; line-height: 20px; color: #fff; }
.stat-value { font-size: 25px; line-height: 34px; font-weight: 700; margin-top: 7px; font-family: "Open Sans", "Noto Sans", sans-serif; }
.yellow { color: #ffff33; }
.yellow .stat-icon { color: #d5d645; }
.cyan { color: #22f5e8; }
.cyan .stat-icon { color: #1fc9c6; }
.red { color: #ff4050; }
.red .stat-icon { color: #d93a4c; }

/* panels */
.panel {
  display: flex; flex-direction: column;
  background: #06183a;
  border: 1px solid #08496a;
  box-shadow: inset 0 0 48px rgba(255, 255, 255, .085);
}
.pill {
  align-self: center; margin: -14px 0 0; height: 29px; width: 150px; flex: none;
  background: #02506c; border-radius: 15px;
  display: flex; align-items: center; gap: 6px;
  padding-left: 16px; white-space: nowrap;
  font-size: 15px; line-height: 29px; font-weight: 700; color: #fff;
}
.pill-wide { width: 182px; padding-left: 17px; gap: 5px; }
.pill-icon { width: 15px; height: 15px; flex: none; color: #e6ebf0; }
.chart { display: block; overflow: hidden; }

.board {
  display: grid; margin-top: 33px;
  grid-template-columns: 447px 929px 447px;
  grid-template-rows: 233px 234px;
  gap: 42px 21px;
}
.panel-map { grid-column: 2; grid-row: 1 / span 2; }

.toolbar { display: flex; justify-content: flex-end; align-items: center; gap: 11px; height: 27px; padding: 6px 25px 4px 0; }
.type-label { font-size: 12px; font-weight: 700; color: #fff; }
.type-select {
  width: 50px; height: 17px; padding: 0 0 0 2px; font: 12px "Noto Sans CJK SC", sans-serif;
  background: #fff; color: #222; border: 1px solid #8a8f96; border-radius: 0;
}

/* chart text */
.chart text { dominant-baseline: central; }
.lg { font-size: 11px; }
.lg12 { font-size: 12px; }
.c-blue { fill: #0a35c8; }
.c-pink { fill: #c9566f; }
.c-yellow { fill: #d9d93a; }
.c-cyan { fill: #22cfc6; }
.c-khaki { fill: #c9bd82; }
.slice { stroke: #1b2040; stroke-width: 1; }
.b-blue { fill: #0033ff; }
.b-pink { fill: #f56e8c; }
.b-khaki { fill: #eee098; }
.b-cyan { fill: #22f5e8; }
.ax { font-size: 11px; fill: #cdd3dc; }
.end { text-anchor: end; }
.mid { text-anchor: middle; }
.xl text { font-size: 11px; fill: #cdd3dc; text-anchor: middle; }
.axis { fill: none; stroke: #1f2a4c; stroke-width: 1.5; }
.axis-thin { fill: none; stroke: #333a48; stroke-width: 1; }
.line { fill: none; stroke: #ffff33; stroke-width: 1.500; }
.pts circle { fill: #ffff33; }
.val { font-size: 12px; fill: #d9dde4; }
.yoy { font-size: 12px; fill: #fff; }
.yoy-h { font-size: 12px; font-weight: 700; fill: #fff; }
.arr-down { fill: none; stroke: #82c12c; stroke-width: 1.800; }
.arr-up { fill: none; stroke: #ff0000; stroke-width: 1.800; }
.sum { font-size: 11px; font-weight: 700; fill: #ffff33; }
.sum-title { font-size: 15px; font-weight: 700; fill: #ffff33; }

/* map */
.prov { fill: #191538; stroke: #283252; stroke-width: 1; vector-effect: non-scaling-stroke; stroke-linejoin: round; }
.dark { fill: #100c2b; }
.bright { fill: #1f1b48; }
.hainan { fill: #2a2456; }
.inset { fill: none; stroke: #22304e; stroke-width: 1; vector-effect: non-scaling-stroke; }
.pin { fill: #cf2050; fill-opacity: .95; }
.dot { fill: #0a9fd8; }
.hot { fill: #14d4ff; }
.ring { fill: rgba(15, 165, 216, .18); stroke: #0fa5d8; stroke-width: .8; opacity: .85; }
.ml { font-size: 10px; fill: #0e9bd0; }
.hot-t { fill: #14c4f4; }

/* tables */
.tables {
  display: grid; margin-top: 37px;
  grid-template-columns: 447px 456px 452px 447px;
  gap: 21px;
  height: 300px;
}
.rank { width: 100%; border-collapse: collapse; table-layout: fixed; }
.rank th:nth-child(1), .rank td:nth-child(1) { width: 30.5%; }
.rank th:nth-child(2), .rank td:nth-child(2) { width: 34.5%; }
.rank th { height: 41px; padding: 5px 0 0; font-size: 12px; font-weight: 500; color: #3fc3f5; text-align: center; }
.rank td { height: 35px; padding: 0; font-size: 11px; color: #fff; text-align: center; }
.rank tbody tr:nth-child(odd) { background: linear-gradient(90deg, #2b364f, #15243f 8%, #15243f 92%, #2b364f); }
```
